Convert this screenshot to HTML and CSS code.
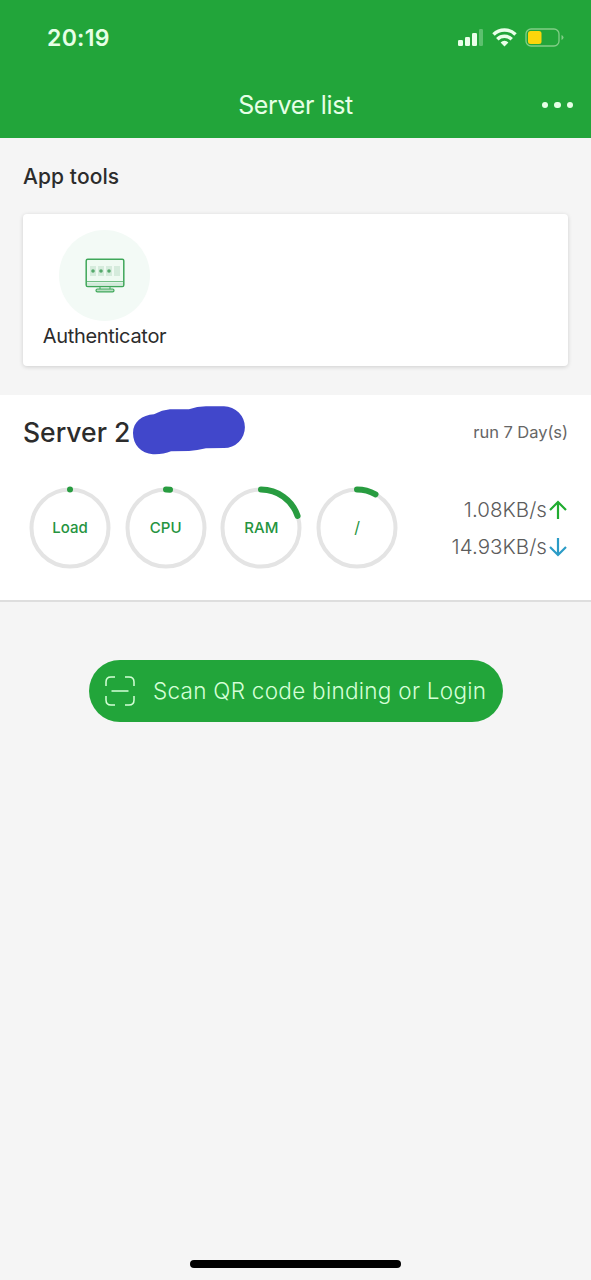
FILE: index.html
```
<!DOCTYPE html>
<html lang="en">
<head>
<meta charset="utf-8">
<title>Server list</title>
<link rel="stylesheet" href="styles.css">
</head>
<body>
<header class="header">
  <div class="status">
    <span class="clock">20:19</span>
    <svg class="status-icons" width="108" height="24" viewBox="0 0 108 24">
      <g fill="#e9ffe9">
        <rect x="1" y="14" width="5" height="6" rx="1.3"/>
        <rect x="8" y="11" width="5" height="9" rx="1.3"/>
        <rect x="15" y="7" width="5" height="13" rx="1.3"/>
        <rect x="22" y="3" width="4" height="17" rx="1.3" opacity=".3"/>
        <path d="M47.500 20.500l-3.900-4.100a5.600 5.600 0 0 1 7.800 0z"/>
      </g>
      <g fill="none" stroke="#e9ffe9" stroke-width="3.500">
        <path d="M36.500 8.900a15.800 15.800 0 0 1 22 0" transform="translate(0 -.5)"/>
        <path d="M40.300 13.300a10.300 10.300 0 0 1 14.400 0"/>
      </g>
      <rect x="69" y="3" width="33" height="17" rx="5" fill="none" stroke="#82ce87" stroke-width="1.300"/>
      <rect x="71" y="5" width="13.500" height="13" rx="2.500" fill="#fbd60b"/>
      <path d="M104.500 9q2 .8 2 2.500t-2 2.500z" fill="#82ce87"/>
    </svg>
  </div>
  <div class="navbar">
    <h1 class="title">Server list</h1>
    <div class="more"><i></i><i></i><i></i></div>
  </div>
</header>
<main>
  <section class="tools">
    <h2 class="tools-title">App tools</h2>
    <div class="tools-card">
      <div class="tool">
        <div class="tool-icon">
          <svg width="40" height="36" viewBox="0 0 40 36" fill="none">
            <rect x="1.200" y="1.200" width="37.600" height="27.300" rx="1.500" fill="#effaf2" stroke="#3fa75a" stroke-width="1.500"/>
            <path d="M2 23.500h36" stroke="#73bf86"/>
            <path d="M2 26h36" stroke="#d3eadb" stroke-width="3"/>
            <g fill="#d5ebdc"><rect x="5" y="8" width="6" height="10"/><rect x="13" y="8" width="6" height="10"/><rect x="21" y="8" width="6" height="10"/><rect x="29" y="8" width="6" height="10"/></g>
            <g fill="#55a96b"><circle cx="8" cy="13" r="1.800"/><circle cx="16" cy="13" r="1.800"/><circle cx="24" cy="13" r="1.800"/></g>
            <path d="M15 29v2M25 29v2" stroke="#3fa75a"/>
            <rect x="11" y="31" width="18" height="2.800" rx="1.400" fill="#b9dfc3" stroke="#3fa75a" stroke-width="1.200"/>
          </svg>
        </div>
        <span class="tool-name">Authenticator</span>
      </div>
    </div>
  </section>
  <section class="server">
    <div class="server-head">
      <div class="server-id">
        <span class="server-name">Server 2</span>
        <svg class="scribble" width="114" height="50" viewBox="0 0 114 50"><path d="M1 28C1 17 10 10 22 9.300Q30 5 38 4.300L57 4.200Q65 1.300 74 1.200L92 1.300A20.900 20.900 0 0 1 92 43.100L74 43.200Q65 45.500 57 46L39 46.300C34 48.500 27 49.500 21 49.200C9 48.500 1 40 1 28Z" fill="#4147cb"/></svg>
      </div>
      <span class="uptime">run 7 Day(s)</span>
    </div>
    <div class="server-body">
      <div class="gauges">
        <div class="gauge"><svg viewBox="0 0 82 84"><circle class="track" cx="41" cy="43" r="38.500"/><path class="value" d="M41 4.500h.01"/></svg><span>Load</span></div>
        <div class="gauge"><svg viewBox="0 0 82 84"><circle class="track" cx="41" cy="43" r="38.500"/><path class="value" d="M41 4.500A38.500 38.500 0 0 1 45 4.700"/></svg><span>CPU</span></div>
        <div class="gauge"><svg viewBox="0 0 82 84"><circle class="track" cx="41" cy="43" r="38.500"/><path class="value" d="M41 4.500A38.500 38.500 0 0 1 77.600 31"/></svg><span>RAM</span></div>
        <div class="gauge"><svg viewBox="0 0 82 84"><circle class="track" cx="41" cy="43" r="38.500"/><path class="value" d="M41 4.500A38.500 38.500 0 0 1 59.500 9.300"/></svg><span class="disk">/</span></div>
      </div>
      <div class="traffic">
        <div class="rate"><span>1.08KB/s</span><svg class="arrow" viewBox="0 0 20 20"><path d="M10 19V2M2 10l8-8 8 8" stroke="#20ac30"/></svg></div>
        <div class="rate"><span>14.93KB/s</span><svg class="arrow" viewBox="0 0 20 20"><path d="M10 1v17M2 10l8 8 8-8" stroke="#2b9bc6"/></svg></div>
      </div>
    </div>
  </section>
  <button class="scan">
    <svg width="30" height="30" viewBox="0 0 30 30" fill="none" stroke="#d5ffd7" stroke-width="1.500"><path d="M1 10V6q0-5 5-5h4M20 1h4q5 0 5 5v4M29 20v4q0 5-5 5h-4M10 29H6q-5 0-5-5v-4M6.500 15h17"/></svg>
    <span>Scan QR code binding or Login</span>
  </button>
</main>
<div class="home-bar"></div>
</body>
</html>
```
FILE: styles.css
```
* { box-sizing: border-box; }
body {
  margin: 0;
  width: 591px;
  height: 1280px;
  display: flex;
  flex-direction: column;
  overflow: hidden;
  background: #f5f5f5;
  color: #2c2c2c;
  font-family: Inter, "Liberation Sans", sans-serif;
}
svg { display: block; flex: none; }
h1, h2 { margin: 0; }
.header { height: 138px; background: #22a53a; color: #e6ffe6; }
.status {
  height: 72px;
  padding: 0 26px 0 47px;
  display: flex;
  align-items: center;
  justify-content: space-between;
}
.clock { font-size: 23px; font-weight: 600; line-height: 28px; margin-top: 4px; letter-spacing: .3px; }
.status-icons { margin-top: 4px; }
.navbar {
  height: 66px;
  padding: 0 18px;
  display: grid;
  grid-template-columns: 1fr auto 1fr;
  align-items: center;
}
.title { grid-column: 2; font-size: 25px; font-weight: 400; line-height: 32px; letter-spacing: -.35px; }
.more { display: flex; gap: 6px; justify-content: flex-end; }
.more i { width: 6.500px; height: 6.500px; border-radius: 50%; background: #e6ffe6; }
main { flex: 1; }
.tools { height: 257px; padding: 24px 23px 0 23px; }
.tools-title { font-size: 21px; font-weight: 500; line-height: 30px; letter-spacing: .1px; }
.tools-card {
  height: 152px;
  margin-top: 22px;
  padding: 16px 19px;
  border-radius: 4px;
  background: #fff;
  box-shadow: 0 1px 4px rgba(0, 0, 0, .16);
}
.tool { width: 125px; display: flex; flex-direction: column; align-items: center; }
.tool-icon {
  width: 91px;
  height: 91px;
  display: grid;
  place-items: center;
  border-radius: 50%;
  background: #f3faf6;
}
.tool-name { margin-top: 1px; font-size: 20px; line-height: 28px; white-space: nowrap; letter-spacing: -.3px; }
.server { height: 207px; background: #fff; border-bottom: 2px solid #dedede; }
.server-head {
  height: 74px;
  padding: 0 23px;
  display: flex;
  align-items: center;
  justify-content: space-between;
}
.server-id { display: flex; align-items: center; }
.server-name { width: 109px; font-size: 26.500px; font-weight: 500; line-height: 32px; white-space: nowrap; }
.scribble { margin-top: -5px; }
.uptime { font-size: 16.500px; color: #666; letter-spacing: -.05px; }
.server-body { padding: 16px 23px 0 29px; display: flex; justify-content: space-between; }
.gauges { display: flex; gap: 13.700px; }
.gauge { width: 82px; height: 84px; display: grid; place-items: center; color: #259440; font-size: 15px; font-weight: 500; }
.gauge svg, .gauge span { grid-area: 1 / 1; }
.gauge svg { width: 82px; height: 84px; }
.gauge .disk { font-size: 16px; font-weight: 400; }
.track, .value { fill: none; }
.track { stroke: #e4e4e4; stroke-width: 4; }
.value { stroke: #289c40; stroke-width: 6; stroke-linecap: round; }
.traffic { padding-top: 6px; color: #5c5c5c; }
.rate { height: 37px; display: flex; align-items: center; justify-content: flex-end; gap: 1px; font-size: 20.500px; font-weight: 300; letter-spacing: .05px; }
.arrow { width: 20px; height: 20px; fill: none; stroke-width: 2.200; }
.scan {
  width: 414px;
  height: 62px;
  margin: 58px 0 0 89px;
  padding: 0 16px;
  display: flex;
  align-items: center;
  gap: 18px;
  border: 0;
  border-radius: 31px;
  background: #22a53a;
  color: #d5ffd7;
  font: 300 22.500px/30px Inter, "Liberation Sans", sans-serif;
  letter-spacing: .28px;
  white-space: nowrap;
}
.home-bar { width: 211px; height: 8px; margin: 0 auto 12px 190px; border-radius: 4px; background: #000; }
```
